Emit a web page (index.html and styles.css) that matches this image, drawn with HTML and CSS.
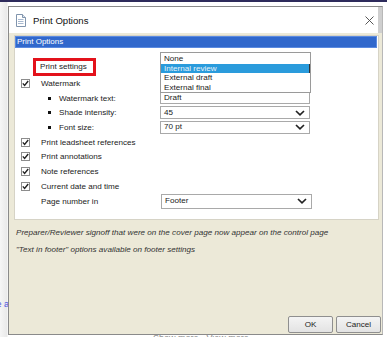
FILE: index.html
```html
<!DOCTYPE html>
<html>
<head>
<meta charset="utf-8">
<link rel="stylesheet" href="styles.css">
</head>
<body>
<div class="topbar"></div>
<div class="page">
  <div class="page-note">Please see the a</div>
  <div class="page-foot">Show more · View more</div>

  <div class="dialog">
    <div class="titlebar">
      <svg class="doc-icon" width="10" height="13" viewBox="0 0 10 13"><path d="M0.5 0.5h6l3 3v9h-9z" fill="#fff" stroke="#8094ad"/><path d="M6.5 0.5v3h3" fill="#dfe6ef" stroke="#8094ad"/><path d="M2 5.5h5.5M2 7.5h5.5M2 9.5h5.5" stroke="#a7b8cf"/></svg>
      <span class="title">Print Options</span>
      <svg class="close" width="9" height="9" viewBox="0 0 9 9"><path d="M0.5 0.5l8 8M8.5 0.5l-8 8" stroke="#444" stroke-width="0.9"/></svg>
    </div>
    <div class="body">
      <div class="panel">
        <div class="panel-head">Print Options</div>
        <div class="panel-content">
          <div class="settings-row"><span class="settings-box">Print settings</span></div>

          <div class="row">
            <div class="lbl"><span class="cb"><svg width="9" height="9" viewBox="0 0 9 9"><path d="M1.8 4.4l1.8 2 3.6-4.4" fill="none" stroke="#222" stroke-width="1.4"/></svg></span>Watermark</div>
          </div>
          <div class="row">
            <div class="lbl sub"><span class="bullet"></span>Watermark text:</div>
            <div class="field input">Draft</div>
          </div>
          <div class="row">
            <div class="lbl sub"><span class="bullet"></span>Shade intensity:</div>
            <div class="field select">45<svg class="chev" width="10" height="6" viewBox="0 0 10 6"><path d="M1 1l4 3.8L9 1" fill="none" stroke="#222" stroke-width="1.7"/></svg></div>
          </div>
          <div class="row">
            <div class="lbl sub"><span class="bullet"></span>Font size:</div>
            <div class="field select">70 pt<svg class="chev" width="10" height="6" viewBox="0 0 10 6"><path d="M1 1l4 3.8L9 1" fill="none" stroke="#222" stroke-width="1.7"/></svg></div>
          </div>
          <div class="row">
            <div class="lbl"><span class="cb"><svg width="9" height="9" viewBox="0 0 9 9"><path d="M1.8 4.4l1.8 2 3.6-4.4" fill="none" stroke="#222" stroke-width="1.4"/></svg></span>Print leadsheet references</div>
          </div>
          <div class="row">
            <div class="lbl"><span class="cb"><svg width="9" height="9" viewBox="0 0 9 9"><path d="M1.8 4.4l1.8 2 3.6-4.4" fill="none" stroke="#222" stroke-width="1.4"/></svg></span>Print annotations</div>
          </div>
          <div class="row">
            <div class="lbl"><span class="cb"><svg width="9" height="9" viewBox="0 0 9 9"><path d="M1.8 4.4l1.8 2 3.6-4.4" fill="none" stroke="#222" stroke-width="1.4"/></svg></span>Note references</div>
          </div>
          <div class="row">
            <div class="lbl"><span class="cb"><svg width="9" height="9" viewBox="0 0 9 9"><path d="M1.8 4.4l1.8 2 3.6-4.4" fill="none" stroke="#222" stroke-width="1.4"/></svg></span>Current date and time</div>
          </div>
          <div class="row">
            <div class="lbl plain">Page number in</div>
            <div class="field select tall">Footer<svg class="chev" width="10" height="6" viewBox="0 0 10 6"><path d="M1 1l4 3.8L9 1" fill="none" stroke="#222" stroke-width="1.7"/></svg></div>
          </div>

          <ul class="dropdown">
            <li>None</li>
            <li class="sel">Internal review</li>
            <li>External draft</li>
            <li>External final</li>
          </ul>
        </div>
      </div>
      <p class="note">Preparer/Reviewer signoff that were on the cover page now appear on the control page</p>
      <p class="note">"Text in footer" options available on footer settings</p>
      <div class="buttons">
        <button class="btn">OK</button>
        <button class="btn">Cancel</button>
      </div>
    </div>
  </div>
</div>
</body>
</html>
```

FILE: styles.css
```css
* { box-sizing: border-box; }
html, body { margin: 0; padding: 0; }
body {
  width: 387px;
  height: 337px;
  overflow: hidden;
  background: #fff;
  font-family: "Liberation Sans", Arial, sans-serif;
  color: #222;
}
.topbar { height: 2px; background: #2e2b5c; }
.page {
  position: relative;
  height: 335px;
  background: linear-gradient(to right, #f6f6f6, #e9e9e9 7px, #fff 8px);
}
.page-note {
  padding-top: 297px;
  margin-left: -58px;
  font-size: 9px;
  color: #4b55e0;
  white-space: nowrap;
}
.page-foot {
  margin-top: 24px;
  margin-left: 153px;
  font-size: 9px;
  color: #888;
}
.dialog {
  position: absolute;
  left: 8px;
  top: 4px;
  width: 375px;
  height: 329px;
  border: 1px solid #8a8a8a;
  border-right-color: #b8b8b8;
  display: flex;
  flex-direction: column;
  background: #ece9d8;
}
.titlebar {
  height: 26px;
  background: #fff;
  display: flex;
  align-items: center;
  padding-left: 7px;
  padding-right: 4px;
  flex: none;
  border-right: 4px solid #cfcfcf;
}
.doc-icon { display: block; }
.title {
  margin-left: 7px;
  font-size: 9.6px;
  color: #111;
}
.close { margin-left: auto; display: block; }
.body {
  flex: 1;
  display: flex;
  flex-direction: column;
  padding: 2px 1px 1px 5px;
}
.panel {
  background: #fff;
  border: 1px solid #d6d3c6;
  height: 185px;
  margin-right: 2px;
  padding: 0 1px 0 0;
}
.panel-head {
  height: 12px;
  background: #3168cc;
  border: 1px solid #5b8ae0;
  color: #fff;
  font-size: 8px;
  line-height: 10px;
  padding-left: 1px;
}
.panel-content {
  position: relative;
  padding-top: 10px;
  font-size: 8.1px;
}
.settings-row { height: 18px; padding-left: 18px; }
.settings-box {
  display: inline-block;
  width: 63px;
  height: 18px;
  border: 3px solid #e3121b;
  padding-left: 4px;
  line-height: 12px;
}
.row {
  height: 14.7px;
  display: grid;
  grid-template-columns: 145px 150px;
  align-items: center;
}
.lbl {
  display: flex;
  align-items: center;
  padding-left: 6px;
  white-space: nowrap;
}
.lbl.plain { padding-left: 26px; }
.lbl.sub { padding-left: 33px; }
.cb {
  width: 9px;
  height: 9px;
  border: 1px solid #8c8c8c;
  background: #fff;
  margin-right: 11px;
  display: flex;
  align-items: center;
  justify-content: center;
  position: relative;
}
.cb svg { position: absolute; left: -1px; top: -1px; }
.bullet {
  width: 3px;
  height: 3px;
  background: #111;
  margin-right: 8px;
}
.field {
  height: 12px;
  border: 1px solid #a9a9a9;
  background: #fff;
  font-size: 8.1px;
  line-height: 10px;
  padding-left: 3px;
  display: flex;
  align-items: center;
  width: 150px;
}
.select { height: 13px; }
.select.tall { height: 15px; width: 151px; margin-left: 1px; }
.chev { margin-left: auto; margin-right: 4px; display: block; }
.dropdown {
  position: absolute;
  left: 145px;
  top: 4px;
  width: 151px;
  margin: 0;
  padding: 1px 0 0 0;
  list-style: none;
  background: #fff;
  border: 1px solid #9a9a9a;
  font-size: 8.1px;
}
.dropdown li {
  height: 9.6px;
  line-height: 9.6px;
  padding-left: 3px;
}
.dropdown li.sel {
  background: #2a9bdc;
  color: #e8f3fb;
  border-right: 1px solid #333;
}
.note {
  margin: 0;
  padding-left: 2px;
  font-size: 8.1px;
  font-style: italic;
  line-height: 17px;
  color: #333;
}
.note:first-of-type { margin-top: 4px; }
.buttons {
  margin-top: auto;
  display: flex;
  justify-content: flex-end;
  gap: 3px;
}
.btn {
  width: 45px;
  height: 17px;
  padding: 0;
  font-family: "Liberation Sans", Arial, sans-serif;
  font-size: 8.1px;
  color: #222;
  border: 1px solid #8f8f8f;
  border-radius: 2px;
  background: linear-gradient(#f4f4f4, #e3e3e3);
}
```
